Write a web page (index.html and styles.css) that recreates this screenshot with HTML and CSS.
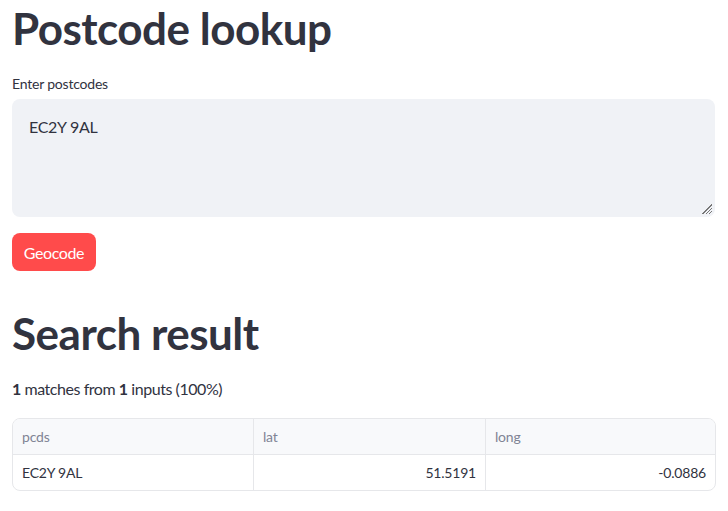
FILE: index.html
```html
<!DOCTYPE html>
<html>
<head>
<meta charset="utf-8">
<link rel="stylesheet" href="styles.css">
</head>
<body>
<main class="page">
  <h1 class="title">Postcode lookup</h1>
  <label class="field-label">Enter postcodes</label>
  <div class="textarea">
    <span class="textarea-text">EC2Y 9AL</span>
    <svg class="grip" width="12" height="12" viewBox="0 0 12 12">
      <path d="M11 2 L2 11 M11 5 L5 11 M11 8 L8 11 M11 1 L1 11" stroke="#777" stroke-width="1" fill="none"/>
    </svg>
  </div>
  <div class="btn-row"><button class="btn">Geocode</button></div>
  <h1 class="title title-2">Search result</h1>
  <p class="summary"><b>1</b> matches from <b>1</b> inputs (100%)</p>
  <div class="table">
    <div class="row head">
      <div class="cell c1">pcds</div>
      <div class="cell c2">lat</div>
      <div class="cell c3">long</div>
    </div>
    <div class="row">
      <div class="cell c1">EC2Y 9AL</div>
      <div class="cell c2 num">51.5191</div>
      <div class="cell c3 num">-0.0886</div>
    </div>
  </div>
</main>
</body>
</html>
```

FILE: styles.css
```css
* { box-sizing: border-box; }
html, body { margin: 0; padding: 0; background: #fff; }
body {
  font-family: "Lato", "Liberation Sans", sans-serif;
  color: #31333f;
}
.page {
  padding: 0 12px;
  width: 728px;
  display: flex;
  flex-direction: column;
}
.title {
  margin: 0;
  padding-top: 2px;
  font-size: 44px;
  font-weight: 700;
  line-height: 52px;
  letter-spacing: -0.5px;
}
.field-label {
  margin-top: 20px;
  font-size: 14px;
  line-height: 20px;
  height: 20px;
  letter-spacing: -0.2px;
}
.textarea {
  position: relative;
  margin-top: 5px;
  height: 118px;
  width: 703px;
  background: #f0f2f6;
  border-radius: 8px;
  padding: 18px 17px;
  font-size: 16px;
  line-height: 20px;
  letter-spacing: -0.3px;
}
.grip {
  position: absolute;
  right: 2px;
  bottom: 2px;
}
.btn-row { margin-top: 16px; display: flex; }
.btn {
  height: 38px;
  width: 84px;
  padding: 0;
  background: #ff4b4b;
  color: #fff;
  border: none;
  border-radius: 8px;
  font-family: inherit;
  font-size: 16px;
  letter-spacing: -0.4px;
}
.title-2 { margin-top: 34px; }
.summary {
  margin: 18px 0 0;
  font-size: 16px;
  line-height: 24px;
  letter-spacing: -0.45px;
}
.summary b { font-weight: 700; }
.table {
  margin-top: 17px;
  width: 704px;
  border: 1px solid #e6e7ea;
  border-radius: 8px;
  overflow: hidden;
  font-size: 14px;
  letter-spacing: -0.2px;
}
.row { display: flex; height: 35px; }
.row.head { height: 36px; background: #f8f9fb; color: #808495; border-bottom: 1px solid #e6e7ea; }
.cell { display: flex; align-items: center; padding: 0 9px; }
.c1 { width: 241px; border-right: 1px solid #e6e7ea; }
.c2 { width: 232px; border-right: 1px solid #e6e7ea; }
.c3 { flex: 1; }
.num { justify-content: flex-end; }
```
